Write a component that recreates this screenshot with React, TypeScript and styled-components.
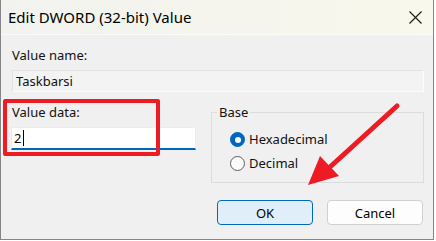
import React from 'react';
import styled, { createGlobalStyle } from 'styled-components';

const GlobalStyle = createGlobalStyle`
    html, body {
        margin: 0;
        padding: 0;
        background: #ffffff;
    }
    body {
        font-family: "Noto Sans", "Liberation Sans", sans-serif;
        color: #111;
    }
`;

const Window = styled.div`
    position: relative;
    width: 434px;
    height: 240px;
    box-sizing: border-box;
    border: 1px solid #858585;
    border-top: none;
    background: #f0f0f0;
    display: flex;
    flex-direction: column;
    overflow: hidden;
`;

const TitleBar = styled.div`
    height: 35px;
    box-sizing: border-box;
    flex-shrink: 0;
    display: flex;
    align-items: center;
    padding-left: 7px;
    padding-right: 11px;
    background: linear-gradient(90deg, #f2f2ef 0%, #f8f8ec 100%);
    border-bottom: 1px solid #fbfbfb;
`;

const Title = styled.div`
    flex: 1;
    font-size: 15px;
    line-height: 20px;
    color: #000;
`;

const CloseButton = styled.div`
    width: 14px;
    height: 14px;
    display: flex;
    align-items: center;
    justify-content: center;
`;

const Body = styled.div`
    flex: 1;
    display: flex;
    flex-direction: column;
    padding: 12px 9px 0 11px;
`;

const Label = styled.div`
    font-size: 13px;
    line-height: 17px;
    color: #111;
`;

const ReadOnlyBox = styled.div`
    margin-top: 6px;
    height: 22px;
    box-sizing: border-box;
    border: 1px solid #e2e2e2;
    border-right-color: #fcfcfc;
    border-bottom-color: #fcfcfc;
    background: #f3f3f3;
    padding-left: 3px;
    font-size: 13px;
    line-height: 20px;
    color: #111;
`;

const Row = styled.div`
    display: flex;
    margin-top: 12px;
    gap: 15px;
`;

const DataColumn = styled.div`
    position: relative;
    width: 184px;
    display: flex;
    flex-direction: column;
`;

const EditBox = styled.div`
    margin-top: 6px;
    margin-left: -1px;
    height: 23px;
    box-sizing: border-box;
    background: #ffffff;
    border: 1px solid #ececec;
    border-bottom: 2px solid #0067c0;
    padding-left: 2px;
    font-size: 13px;
    line-height: 20px;
    display: flex;
    align-items: center;
    color: #000;
`;

const Caret = styled.span`
    display: inline-block;
    width: 1px;
    height: 16px;
    margin-left: 2px;
    background: #000;
`;

const Highlight = styled.div`
    position: absolute;
    left: -9px;
    top: -5px;
    width: 157px;
    height: 57px;
    box-sizing: border-box;
    border: 4px solid #ed1c24;
    border-radius: 2px;
    pointer-events: none;
`;

const GroupBox = styled.fieldset`
    flex: 1;
    margin: 0;
    padding: 11px 0 11px 18px;
    border: 1px solid #dcdcdc;
    display: flex;
    flex-direction: column;
    gap: 9px;
    min-width: 0;
`;

const Legend = styled.legend`
    margin-left: -13px;
    padding: 0 2px;
    font-size: 13px;
    line-height: 17px;
    color: #111;
`;

const RadioRow = styled.div`
    display: flex;
    align-items: center;
    gap: 4px;
    font-size: 13px;
    line-height: 15px;
    color: #111;
`;

const RadioCircle = styled.span<{ checked: boolean }>`
    width: 15px;
    height: 15px;
    box-sizing: border-box;
    border-radius: 50%;
    display: inline-flex;
    align-items: center;
    justify-content: center;
    background: ${props => props.checked ? '#0067c0' : '#fbfbfb'};
    border: 1px solid ${props => props.checked ? '#0067c0' : '#5f5f5f'};

    &::after {
        content: '';
        display: ${props => props.checked ? 'block' : 'none'};
        width: 6px;
        height: 6px;
        border-radius: 50%;
        background: #ffffff;
    }
`;

const ButtonRow = styled.div`
    display: flex;
    justify-content: flex-end;
    gap: 14px;
    margin-top: 17px;
    padding-right: 1px;
`;

const Button = styled.div<{ primary?: boolean }>`
    width: 96px;
    height: 25px;
    box-sizing: border-box;
    border-radius: 4px;
    display: flex;
    align-items: center;
    justify-content: center;
    font-size: 13px;
    color: #000;
    background: ${props => props.primary ? '#e0eef9' : '#fdfdfd'};
    border: 1px solid ${props => props.primary ? '#0067c0' : '#d0d0d0'};
`;

const ArrowLayer = styled.svg`
    position: absolute;
    left: 0;
    top: 0;
    pointer-events: none;
`;

function Radio({ label, checked }: { label: string, checked: boolean }) {
    return (
        <RadioRow>
            <RadioCircle checked={checked} />
            {label}
        </RadioRow>
    );
}

export default function App() {
    return (
        <>
            <GlobalStyle />
            <Window>
                <TitleBar>
                    <Title>Edit DWORD (32-bit) Value</Title>
                    <CloseButton>
                        <svg width="13" height="13" viewBox="0 0 13 13">
                            <path d="M0.5 0.5 L12.5 12.5 M12.5 0.5 L0.5 12.5" stroke="#1a1a1a" strokeWidth="1.1" fill="none" />
                        </svg>
                    </CloseButton>
                </TitleBar>

                <Body>
                    <Label>Value name:</Label>
                    <ReadOnlyBox>Taskbarsi</ReadOnlyBox>

                    <Row>
                        <DataColumn>
                            <Label>Value data:</Label>
                            <EditBox>2<Caret /></EditBox>
                            <Highlight />
                        </DataColumn>

                        <GroupBox>
                            <Legend>Base</Legend>
                            <Radio label="Hexadecimal" checked />
                            <Radio label="Decimal" checked={false} />
                        </GroupBox>
                    </Row>

                    <ButtonRow>
                        <Button primary>OK</Button>
                        <Button>Cancel</Button>
                    </ButtonRow>
                </Body>

                <ArrowLayer width="434" height="240" viewBox="0 0 434 240">
                    <line x1="396" y1="106" x2="329" y2="167" stroke="#ed1c24" strokeWidth="5" strokeLinecap="round" />
                    <polygon points="307,185 319,156 338,176" fill="#ed1c24" />
                </ArrowLayer>
            </Window>
        </>
    );
}
